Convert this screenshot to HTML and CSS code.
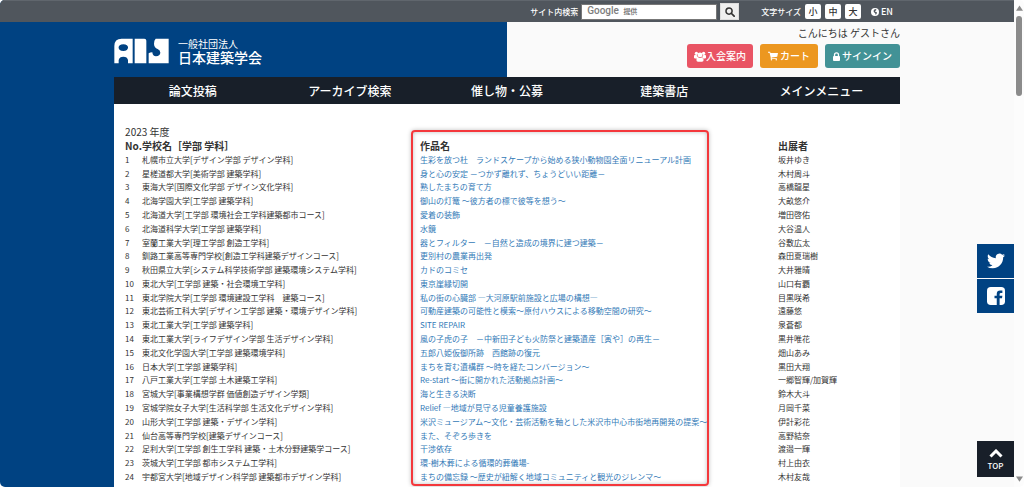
FILE: index.html
```html
<!DOCTYPE html>
<html lang="ja">
<head>
<meta charset="utf-8">
<title>日本建築学会</title>
<link rel="stylesheet" href="styles.css">
</head>
<body>
<div class="window">
<div class="page">
  <div class="topbar">
    <div class="container topbar-inner">
      <form class="search">
        <label for="q">サイト内検索</label>
        <div class="search-field">
          <input id="q" type="text">
          <span class="search-brand"><b>Google</b> <small>提供</small></span>
        </div>
        <button class="search-button" type="button" aria-label="検索">
          <svg viewBox="0 0 16 16" width="10" height="10"><circle cx="6.5" cy="6.5" r="4.9" fill="none" stroke="#333" stroke-width="2.4"/><path d="M10 10l4.6 4.6" stroke="#333" stroke-width="2.8" stroke-linecap="round"/></svg>
        </button>
      </form>
      <div class="sizes">
        <span class="sizes-label">文字サイズ</span>
        <button type="button">小</button>
        <button type="button">中</button>
        <button type="button">大</button>
      </div>
      <a class="lang" href="#">
        <svg viewBox="0 0 16 16" width="8" height="8"><circle cx="8" cy="8" r="8" fill="#fff"/><path d="M8 2l3 1-1 2-2 1 .5 1.500 2.500.5 1 2-2 3-1 .5-.5-3-2.500-2L5 6l1-2z" fill="#50565d"/></svg>
        EN</a>
    </div>
  </div>

  <header class="container header">
    <a class="logo" href="#" aria-label="日本建築学会">
      <svg viewBox="0 0 165 78" width="55" height="26" fill="#fff">
        <path fill-rule="evenodd" d="M1 76V24Q1 2 23 2H56V76H42V66Q40 56 28 56T14 66V76ZM28 19C9 19 9 39 28 39S47 19 28 19Z"/>
        <path d="M62 2H91Q97 2 97 8V76H62Z"/>
        <path d="M125 2H164V76H104V46Q108 43 115 43Q116 55 126 55Q138 54 139 44Q139 36 131 33Q120 29 120 17Q120 6 125 2Z"/>
      </svg>
      <span class="logo-text"><span class="logo-kind">一般社団法人</span><span class="logo-name">日本建築学会</span></span>
    </a>
    <div class="account">
      <p class="welcome">こんにちは ゲストさん</p>
      <div class="actions">
        <a class="btn btn-join" href="#"><svg viewBox="0 0 30 26" width="12" height="11" fill="#fff"><circle cx="6" cy="5" r="4"/><circle cx="24" cy="5" r="4"/><circle cx="15" cy="9" r="6"/><path d="M0 16V12Q1 8 4 9L8 10Q8 14 11 16L7 18H3Q0 18 0 16ZM30 16V12Q29 8 26 9L22 10Q22 14 19 16L23 18H27Q30 18 30 16ZM6 22Q6 15 10 15Q15 18 20 15Q24 15 24 22Q24 26 20 26H10Q6 26 6 22Z"/></svg>入会案内</a>
        <a class="btn btn-cart" href="#"><svg viewBox="0 0 26 24" width="10" height="10" fill="#fff"><path d="M0 1H5.500L6.500 4H26L24 14L9.500 16V18H23V20H7V16L4 3.500H0Z"/><circle cx="9" cy="22" r="2"/><circle cx="21.500" cy="22" r="2"/></svg> カート</a>
        <a class="btn btn-sign" href="#"><svg viewBox="0 0 16 20" width="7" height="9" fill="#fff"><path fill-rule="evenodd" d="M2 9V6Q2 0 8 0T14 6V9Q16 9 16 11V18Q16 20 14 20H2Q0 20 0 18V11Q0 9 2 9ZM5 9H11V6Q11 3 8 3T5 6Z"/></svg> サインイン</a>
      </div>
    </div>
  </header>

  <nav class="container nav">
    <a href="#">論文投稿</a>
    <a href="#">アーカイブ検索</a>
    <a href="#">催し物・公募</a>
    <a href="#">建築書店</a>
    <a href="#">メインメニュー</a>
  </nav>

  <main class="container main">
    <p class="year">2023 年度</p>
    <div class="works">
      <table>
        <colgroup><col class="col-no"><col class="col-school"><col class="col-title"><col></colgroup>
        <thead><tr><th>No.</th><th>学校名［学部 学科］</th><th>作品名</th><th>出展者</th></tr></thead>
        <tbody>
          <tr><td>1</td><td>札幌市立大学[デザイン学部 デザイン学科]</td><td><a href="#">生彩を放つ杜　ランドスケープから始める狭小動物園全面リニューアル計画</a></td><td>坂井ゆき</td></tr>
          <tr><td>2</td><td>星槎道都大学[美術学部 建築学科]</td><td><a href="#">身と心の安定 －つかず離れず、ちょうどいい距離－</a></td><td>木村周斗</td></tr>
          <tr><td>3</td><td>東海大学[国際文化学部 デザイン文化学科]</td><td><a href="#">熟したまちの育て方</a></td><td>高橋龍星</td></tr>
          <tr><td>4</td><td>北海学園大学[工学部 建築学科]</td><td><a href="#">御山の灯篭 ～彼方者の標で彼等を想う～</a></td><td>大畝悠介</td></tr>
          <tr><td>5</td><td>北海道大学[工学部 環境社会工学科建築都市コース]</td><td><a href="#">愛着の装飾</a></td><td>増田啓佑</td></tr>
          <tr><td>6</td><td>北海道科学大学[工学部 建築学科]</td><td><a href="#">水鏡</a></td><td>大谷温人</td></tr>
          <tr><td>7</td><td>室蘭工業大学[理工学部 創造工学科]</td><td><a href="#">器とフィルター　－自然と造成の境界に建つ建築－</a></td><td>谷敷広太</td></tr>
          <tr><td>8</td><td>釧路工業高等専門学校[創造工学科建築デザインコース]</td><td><a href="#">更別村の農業再出発</a></td><td>森田夏瑞樹</td></tr>
          <tr><td>9</td><td>秋田県立大学[システム科学技術学部 建築環境システム学科]</td><td><a href="#">カドのコミセ</a></td><td>大井雅晴</td></tr>
          <tr><td>10</td><td>東北大学[工学部 建築・社会環境工学科]</td><td><a href="#">東京崖縁切開</a></td><td>山口有覇</td></tr>
          <tr><td>11</td><td>東北学院大学[工学部 環境建設工学科　建築コース]</td><td><a href="#">私の街の心臓部 ―大河原駅前施設と広場の構想―</a></td><td>目黒咲希</td></tr>
          <tr><td>12</td><td>東北芸術工科大学[デザイン工学部 建築・環境デザイン学科]</td><td><a href="#">可動産建築の可能性と模索～原付ハウスによる移動空間の研究～</a></td><td>遠藤悠</td></tr>
          <tr><td>13</td><td>東北工業大学[工学部 建築学科]</td><td><a href="#">SITE REPAIR</a></td><td>泉蒼都</td></tr>
          <tr><td>14</td><td>東北工業大学[ライフデザイン学部 生活デザイン学科]</td><td><a href="#">風の子虎の子　－中新田子ども火防祭と建築遺産［寅や］の再生－</a></td><td>黒井唯花</td></tr>
          <tr><td>15</td><td>東北文化学園大学[工学部 建築環境学科]</td><td><a href="#">五郎八姫仮御所跡　西館跡の復元</a></td><td>畑山あみ</td></tr>
          <tr><td>16</td><td>日本大学[工学部 建築学科]</td><td><a href="#">まちを育む遺構群 ～時を経たコンバージョン～</a></td><td>黒田大翔</td></tr>
          <tr><td>17</td><td>八戸工業大学[工学部 土木建築工学科]</td><td><a href="#">Re-start ～街に開かれた活動拠点計画～</a></td><td>一郷智輝/加賀輝</td></tr>
          <tr><td>18</td><td>宮城大学[事業構想学群 価値創造デザイン学類]</td><td><a href="#">海と生きる決断</a></td><td>鈴木大斗</td></tr>
          <tr><td>19</td><td>宮城学院女子大学[生活科学部 生活文化デザイン学科]</td><td><a href="#">Relief ―地域が見守る児童養護施設</a></td><td>月岡千菜</td></tr>
          <tr><td>20</td><td>山形大学[工学部 建築・デザイン学科]</td><td><a href="#">米沢ミュージアム～文化・芸術活動を軸とした米沢市中心市街地再開発の提案～</a></td><td>伊計彩花</td></tr>
          <tr><td>21</td><td>仙台高等専門学校[建築デザインコース]</td><td><a href="#">また、そぞろ歩きを</a></td><td>高野結奈</td></tr>
          <tr><td>22</td><td>足利大学[工学部 創生工学科 建築・土木分野建築学コース]</td><td><a href="#">干渉依存</a></td><td>渡邉一輝</td></tr>
          <tr><td>23</td><td>茨城大学[工学部 都市システム工学科]</td><td><a href="#">環-樹木葬による循環的葬儀場-</a></td><td>村上由衣</td></tr>
          <tr><td>24</td><td>宇都宮大学[地域デザイン科学部 建築都市デザイン学科]</td><td><a href="#">まちの備忘録 ～歴史が紐解く地域コミュニティと観光のジレンマ～</a></td><td>木村友哉</td></tr>
        </tbody>
      </table>
      <div class="highlight"></div>
    </div>
  </main>

  <div class="share">
    <a href="#" aria-label="Twitter"><svg viewBox="0 0 24 24" width="18" height="18" fill="#fff"><path d="M23.953 4.570a10 10 0 01-2.825.775 4.958 4.958 0 002.163-2.723c-.951.555-2.005.959-3.127 1.184a4.920 4.920 0 00-8.384 4.482C7.690 8.095 4.067 6.130 1.640 3.162a4.822 4.822 0 00-.666 2.475c0 1.710.870 3.213 2.188 4.096a4.904 4.904 0 01-2.228-.616v.060a4.923 4.923 0 003.946 4.827 4.996 4.996 0 01-2.212.085 4.936 4.936 0 004.604 3.417 9.867 9.867 0 01-6.102 2.105c-.390 0-.779-.023-1.170-.067a13.995 13.995 0 007.557 2.209c9.053 0 13.998-7.496 13.998-13.985 0-.210 0-.420-.015-.630A9.935 9.935 0 0024 4.590z"/></svg></a>
    <a href="#" aria-label="Facebook"><svg viewBox="0 0 24 24" width="18" height="18"><rect width="24" height="24" rx="5" fill="#fff"/><path d="M13 24V15H10V11.500H13V9Q13 4.500 17.500 4.500H20.500V8H18.500Q16.800 8 16.800 9.500V11.500H20.500L20 15H16.800V24Z" fill="#004282"/></svg></a>
  </div>
  <a class="to-top" href="#"><svg viewBox="0 0 14 9" width="14" height="9"><path d="M1.500 7.500L7 2L12.500 7.500" fill="none" stroke="#fff" stroke-width="3"/></svg>TOP</a>
</div>
<div class="scrollbar">
  <svg viewBox="0 0 8 6" width="7" height="6"><path d="M4 0L8 6H0Z" fill="#8b8b8b"/></svg>
  <div class="track"><div class="thumb"></div></div>
  <svg viewBox="0 0 8 6" width="7" height="6"><path d="M4 6L8 0H0Z" fill="#8b8b8b"/></svg>
</div>
</div>
</body>
</html>
```

FILE: styles.css
```css
* { box-sizing: border-box; }

body {
  margin: 0;
  background: #fff;
  color: #333;
  font-family: "Noto Sans CJK JP", "Noto Sans", sans-serif;
  font-size: 8px;
  line-height: 12px;
}

a { color: inherit; text-decoration: none; }
p { margin: 0; }
svg { display: block; flex: none; }
button, input { font: inherit; color: inherit; }

.window {
  display: flex;
  min-height: 100vh;
  border-radius: 5px;
  overflow: hidden;
}

.page {
  flex: 1;
  min-width: 0;
  display: flex;
  flex-direction: column;
  background: linear-gradient(to right, #004282 50%, #fafafa 50%);
}

.container { width: 77.5%; margin: 0 auto; }

/* Top bar */
.topbar {
  background: #50565d;
  border-top: 1px solid #60666d;
  color: #fff;
  font-weight: 500;
}

.topbar-inner {
  display: flex;
  align-items: center;
  justify-content: flex-end;
  height: 21px;
  padding-right: 7px;
}

.search, .sizes, .lang { display: flex; align-items: center; }
.search { gap: 3px; }
.search-field { position: relative; display: flex; }

.search-field input {
  width: 136px;
  height: 16px;
  padding: 0 6px;
  border: 1px solid #777;
  background: #fff;
  color: #333;
}

.search-brand {
  position: absolute;
  top: 1px;
  left: 6px;
  color: #7d7d7d;
  font-family: Roboto, sans-serif;
  font-size: 10px;
  pointer-events: none;
}

.search-brand b { font-weight: 500; }
.search-brand small { margin-left: 2px; font: 700 7px "Noto Sans CJK JP", sans-serif; }

.search-button {
  display: flex;
  align-items: center;
  justify-content: center;
  width: 19px;
  height: 17px;
  padding: 0;
  border: 1px solid #ddd;
  background: #efefef;
}

.sizes { gap: 4px; margin-left: 22px; }

.sizes button {
  width: 16px;
  height: 15px;
  padding: 0;
  border: 0;
  border-radius: 2px;
  background: #fff;
  color: #333;
  font-size: 9px;
  line-height: 15px;
}

.lang { gap: 2px; margin-left: 10px; font-size: 9px; }

/* Header */
.header {
  display: flex;
  justify-content: space-between;
  height: 55px;
}

.logo {
  display: flex;
  align-items: flex-start;
  gap: 9px;
  padding-top: 16px;
  color: #fff;
}

.logo-text { display: flex; flex-direction: column; }
.logo-kind { font-size: 10px; line-height: 11px; }
.logo-name { font-size: 14px; line-height: 16px; font-weight: 500; }

.account {
  display: flex;
  flex-direction: column;
  align-items: flex-end;
  gap: 4px;
  padding-top: 3px;
}

.welcome { font-size: 10px; line-height: 15px; }
.actions { display: flex; gap: 7px; }

.btn {
  display: flex;
  align-items: center;
  gap: 2px;
  height: 24px;
  padding: 0 8px;
  border-radius: 3px;
  color: #fff;
  font-size: 10px;
  font-weight: 500;
}

.btn-join { gap: 0; padding: 0 7px; background: #e95464; }
.btn-cart { background: #ec9720; }
.btn-sign { background: #429296; }

/* Navigation */
.nav { display: flex; background: #181f29; color: #fff; }

.nav a {
  flex: 1;
  text-align: center;
  font-size: 12px;
  line-height: 27px;
  font-weight: 500;
}

/* Works list */
.main {
  flex: 1;
  display: flex;
  flex-direction: column;
  padding: 21px 11px 3px;
  background: #fff;
}

.year { font-size: 10px; line-height: 14px; }

.works {
  position: relative;
  flex: 1;
  display: flex;
}

table {
  flex: 1;
  table-layout: fixed;
  border-collapse: collapse;
}

.col-no { width: 16px; }
.col-school { width: 278px; }
.col-title { width: 358px; }

th, td {
  padding: 0;
  text-align: left;
  white-space: nowrap;
}

th { height: 14px; font-size: 10px; line-height: 14px; font-weight: 700; }
td a { color: #337ab7; }

.highlight {
  position: absolute;
  top: -9px;
  bottom: -2px;
  left: 37.4%;
  width: 39%;
  border: 2px solid #f4383c;
  border-radius: 4px;
  box-shadow: 0 0 4px rgba(0, 0, 0, 0.25), inset 0 0 4px rgba(0, 0, 0, 0.25);
  pointer-events: none;
}

/* Floating buttons */
.share {
  position: fixed;
  top: 50%;
  right: 10px;
  display: flex;
  flex-direction: column;
  gap: 1px;
}

.share a {
  display: flex;
  align-items: center;
  justify-content: center;
  width: 37px;
  height: 34px;
  background: #004282;
}

.to-top {
  position: fixed;
  right: 10px;
  bottom: 10px;
  display: flex;
  flex-direction: column;
  align-items: center;
  gap: 2px;
  width: 37px;
  height: 36px;
  padding-top: 8px;
  background: #181f29;
  color: #fff;
  font-weight: 500;
}

/* Scrollbar */
.scrollbar {
  display: flex;
  flex-direction: column;
  align-items: center;
  gap: 5px;
  width: 10px;
  padding: 5px 0;
  background: #fcfcfc;
}

.track { flex: 1; }
.thumb { width: 6px; height: 80px; border-radius: 3px; background: #8b8b8b; }
```
